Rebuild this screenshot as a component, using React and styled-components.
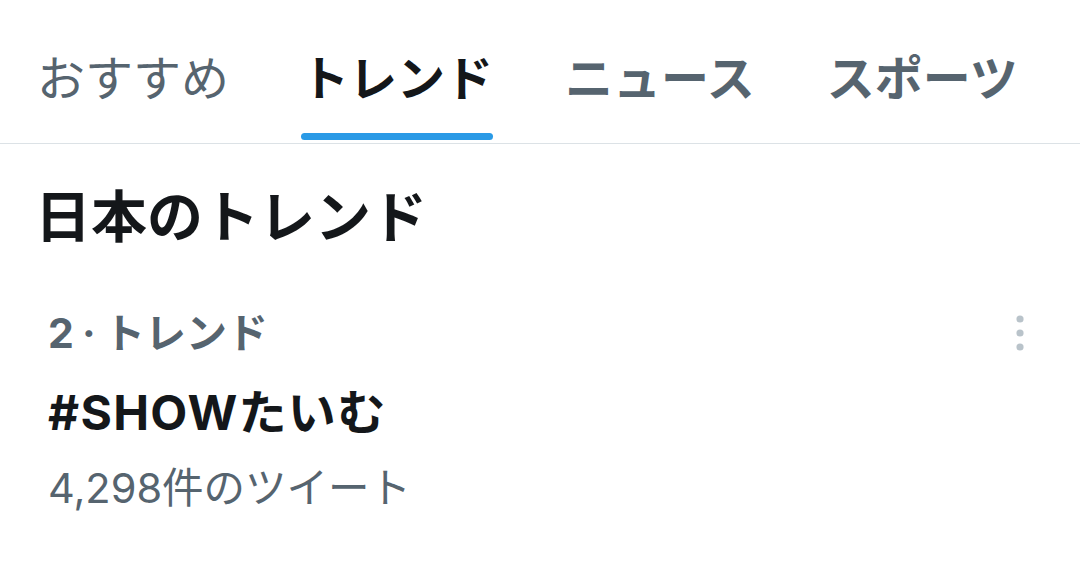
import React from "react";
import styled, { createGlobalStyle } from "styled-components";

const Global = createGlobalStyle`
  html, body { margin: 0; padding: 0; background: #ffffff; }
  body {
    font-family: Inter, "Noto Sans CJK JP", sans-serif;
    -webkit-font-smoothing: antialiased;
  }
`;

const Page = styled.div`
  width: 1080px;
  height: 568px;
  background: #fff;
  overflow: hidden;
`;

const TabBar = styled.nav`
  display: flex;
  border-bottom: 1px solid #dce2e6;
`;

const Tab = styled.div`
  display: flex;
  flex-direction: column;
  align-items: stretch;
  padding: 51px 36px 3px;
  &:first-child { padding-left: 37px; }
`;

const TabLabel = styled.span`
  font-family: "Noto Sans CJK JP", sans-serif;
  font-size: 48px;
  line-height: 48px;
  font-weight: ${(p) => (p.$active ? 700 : p.$weight || 700)};
  color: ${(p) => (p.$active ? "#14171a" : "#56646f")};
  white-space: nowrap;
`;

const Indicator = styled.div`
  height: 7px;
  margin-top: 34px;
  border-radius: 4px;
  background: ${(p) => (p.$active ? "#2a9ae6" : "transparent")};
`;

const Heading = styled.h2`
  margin: 0;
  padding: 41px 0 0 35px;
  font-family: "Noto Sans CJK JP", sans-serif;
  font-size: 56px;
  line-height: 56px;
  font-weight: 700;
  color: #14171a;
`;

const TrendItem = styled.div`
  display: flex;
  flex-direction: column;
  padding: 72px 56px 0 48px;
`;

const MetaRow = styled.div`
  display: flex;
  justify-content: space-between;
  align-items: flex-start;
`;

const Meta = styled.span`
  font-size: 41px;
  line-height: 41px;
  font-weight: 700;
  color: #56646f;
`;

const Dot = styled.span`
  margin: 0 0.2em;
`;

const MoreButton = styled.button`
  border: 0;
  background: none;
  padding: 0;
  width: 8px;
  height: 40px;
  display: flex;
  align-items: center;
  justify-content: center;
`;

const Title = styled.div`
  margin-top: 35px;
  font-size: 48px;
  line-height: 48px;
  font-weight: 700;
  letter-spacing: 1.3px;
  color: #14171a;
`;

const Count = styled.div`
  margin-top: 31px;
  font-size: 41.5px;
  line-height: 41.5px;
  font-weight: 400;
  color: #56646f;
`;

const tabs = [
  { label: "おすすめ", weight: 400 },
  { label: "トレンド", active: true },
  { label: "ニュース" },
  { label: "スポーツ" },
];

export default function App() {
  return (
    <Page>
      <Global />
      <TabBar>
        {tabs.map((t) => (
          <Tab key={t.label}>
            <TabLabel $active={t.active} $weight={t.weight}>
              {t.label}
            </TabLabel>
            <Indicator $active={t.active} />
          </Tab>
        ))}
      </TabBar>
      <Heading>日本のトレンド</Heading>
      <TrendItem>
        <MetaRow>
          <Meta>
            2<Dot>·</Dot>トレンド
          </Meta>
          <MoreButton aria-label="その他">
            <svg width="8" height="36" viewBox="0 0 8 36">
              <circle cx="4" cy="4" r="3.6" fill="#b9c3ca" />
              <circle cx="4" cy="18" r="3.6" fill="#b9c3ca" />
              <circle cx="4" cy="32" r="3.6" fill="#b9c3ca" />
            </svg>
          </MoreButton>
        </MetaRow>
        <Title>#SHOWたいむ</Title>
        <Count>4,298件のツイート</Count>
      </TrendItem>
    </Page>
  );
}
